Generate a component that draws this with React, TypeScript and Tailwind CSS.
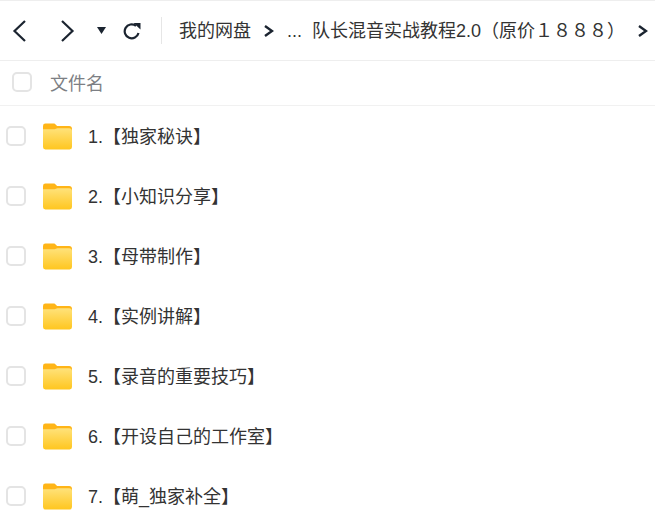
import React from 'react';

const rows = ['1.【独家秘诀】', '2.【小知识分享】', '3.【母带制作】', '4.【实例讲解】', '5.【录音的重要技巧】', '6.【开设自己的工作室】', '7.【萌_独家补全】'];

const Check: React.FC = () => (
  <div className="w-5 h-5 shrink-0 rounded-[5px] border-2 border-[#e4e4e4] bg-white" />
);

const Folder: React.FC = () => (
  <svg width="29" height="27" viewBox="0 0 30 28" preserveAspectRatio="none" className="block shrink-0">
    <defs>
      <linearGradient id="body" x1="0" y1="0" x2="0" y2="1">
        <stop offset="0" stopColor="#ffe27a" />
        <stop offset="1" stopColor="#ffc61f" />
      </linearGradient>
    </defs>
    <path d="M0 3a2.5 2.5 0 0 1 2.5-2.5h8.5c1.2 0 1.8.6 2.6 1.6l.9 1.1H27a3 3 0 0 1 3 3V12H0z" fill="#ffb517" />
    <path d="M0 6.5h12c1.2 0 1.6-1 3-1h12a3 3 0 0 1 3 3V25a2.5 2.5 0 0 1-2.5 2.5h-25A2.5 2.5 0 0 1 0 25z" fill="url(#body)" />
  </svg>
);

const Chevron: React.FC = () => (
  <svg width="10" height="12" viewBox="0 0 10 12" className="shrink-0" fill="none" stroke="#1b2430" strokeWidth="2.4">
    <path d="M1 1l7 5-7 5" />
  </svg>
);

export default function App() {
  return (
    <div className="w-[655px] h-[520px] overflow-hidden bg-white text-[18px] text-[#333333] border-t border-[#eeeeee] font-['Liberation_Sans','Noto_Sans_CJK_SC',sans-serif]">
      <div className="h-[60px] flex items-center border-b border-[#eeeeee] whitespace-nowrap">
        <svg width="16" height="24" viewBox="0 0 16 24" className="ml-[12px] shrink-0" fill="none" stroke="#1b2430" strokeWidth="2.2">
          <path d="M13 2L2.500 12 13 22" />
        </svg>
        <svg width="16" height="24" viewBox="0 0 16 24" className="ml-[32px] shrink-0" fill="none" stroke="#1b2430" strokeWidth="2.2">
          <path d="M2 2l10.500 10L2 22" />
        </svg>
        <svg width="9" height="7" viewBox="0 0 9 7" className="ml-[21px] shrink-0" fill="#1b2430">
          <path d="M0 0h9L4.500 7z" />
        </svg>
        <svg width="18" height="18" viewBox="0 0 18 18" className="ml-[17px] shrink-0" fill="none" stroke="#1b2430" strokeWidth="2.2">
          <path d="M15.500 11A7 7 0 1 1 13 3.800" />
          <path d="M10.500 1H17.500V7.500z" fill="#1b2430" stroke="none" />
        </svg>
        <div className="w-px h-[27px] bg-[#e6e6e6] ml-[20px] shrink-0" />
        <span className="ml-[17px] pt-[2px]">我的网盘</span>
        <div className="ml-[13px]"><Chevron /></div>
        <span className="ml-[13px] pt-[2px]">...</span>
        <span className="ml-[10px] pt-[2px]">队长混音实战教程2.0（原价１８８８）</span>
        <div className="ml-[13px]"><Chevron /></div>
      </div>
      <div className="h-[45px] flex items-center pl-[12px] border-b border-[#f1f1f1]">
        <div className="mb-[2px]"><Check /></div>
        <span className="ml-[18px] pt-[2px] text-[#7d7f84]">文件名</span>
      </div>
      {rows.map(name => (
        <div key={name} className="h-[60px] flex items-center pl-[6px]">
          <Check />
          <div className="ml-[17px] mt-[1px]"><Folder /></div>
          <span className="ml-[16px] pt-[2px]">{name}</span>
        </div>
      ))}
    </div>
  );
}
